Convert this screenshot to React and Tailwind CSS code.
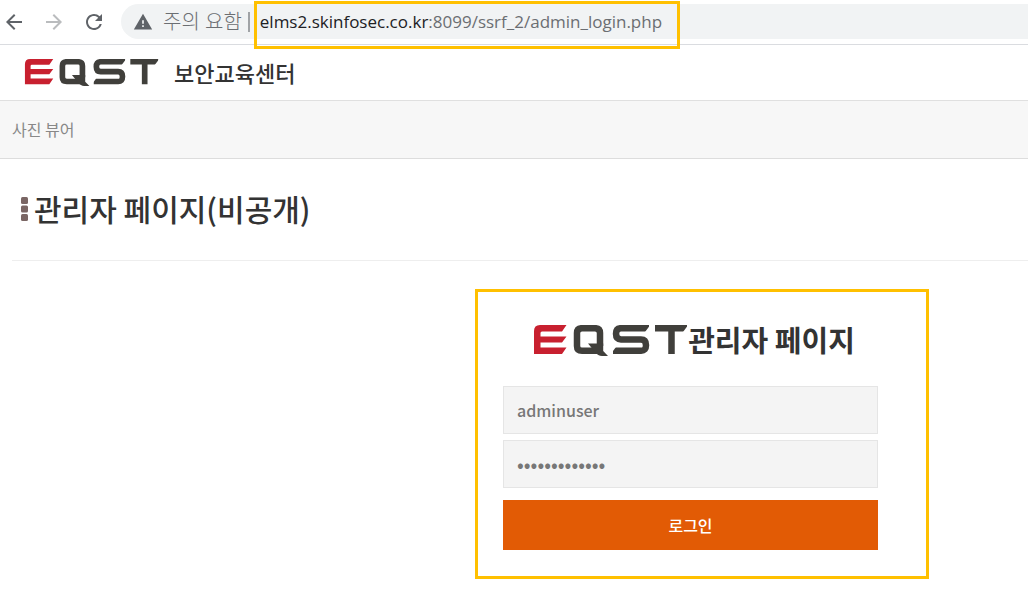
import React from 'react'
import { MdArrowBack, MdArrowForward, MdRefresh, MdWarning } from 'react-icons/md'

const EqstLogo = ({ className }) => (
    <svg viewBox="0 0 154 31" className={className} role="img" aria-label="EQST">
        <path
            fill="#c8202f"
            d="M6 0H32.500L28 6.500H8Q6.500 6.500 6.500 8V11.500H32.500L28 17.500H6.500V22.500H32.500L28 29H0V6Q0 0 6 0Z"
        />
        <g fill="none" stroke="#403f3b" strokeWidth="6.5">
            <path d="M66 21V8Q66 3.200 61 3.200H48Q43 3.200 43 8V21Q43 25.800 48 25.800H64" />
            <path d="M115 3.200H87Q82 3.200 82 8.800T87 14.500H107Q112 14.500 112 20.200T107 25.800H79" />
            <path d="M121 3.200H153M137.500 3V29" />
        </g>
        <path fill="#403f3b" d="M54 18.500H69.200V26L74 31H68Q64 31 61 27Z" />
        <path fill="#fff" d="M117 -1V7H111ZM155 -1V7H149ZM76 21V30L82 22Z" />
    </svg>
)

const BrowserBar = () => (
    <div className="flex h-[45px] items-start border-b border-[#dadce0] pt-1">
        <div className="flex h-[35px] w-[121px] shrink-0 items-center gap-4 pl-0.5 text-[#5f6368]">
            <button type="button" aria-label="뒤로">
                <MdArrowBack className="size-6" />
            </button>
            <button type="button" aria-label="앞으로" className="text-[#babcbe]">
                <MdArrowForward className="size-6" />
            </button>
            <button type="button" aria-label="새로고침">
                <MdRefresh className="size-6" />
            </button>
        </div>
        <div className="flex h-[35px] flex-1 items-center rounded-l-full bg-[#f1f3f4] pl-3 font-['Open_Sans','Noto_Sans_CJK_KR',sans-serif] text-[17px] text-[#6b6e72]">
            <MdWarning className="mr-2.5 size-5 text-[#5f6368]" />
            <span className="text-[20px] leading-6 font-light">주의 요함</span>
            <span className="mr-1 ml-1.5 h-5 w-0.5 bg-[#a0a3a6]" />
            <div className="relative flex h-full items-center px-1.5">
                <span className="text-[#202124]">elms2.skinfosec.co.kr</span>
                <span>:8099/ssrf_2/admin_login.php</span>
                {/* highlight frame */}
                <span className="absolute -top-[3px] -right-3 -bottom-[10px] left-0 border-3 border-[#ffc000]" />
            </div>
        </div>
    </div>
)

const LoginForm = () => (
    <form
        className="w-[454px] border-3 border-[#ffc000] pt-7 pr-12 pb-[26px] pl-[25px]"
        onSubmit={(e) => e.preventDefault()}
    >
        <h2 className="mb-[26px] flex h-10 items-center justify-center pl-2 text-[29px] font-bold text-[#333]">
            <EqstLogo className="h-[31px] w-[154px] shrink-0" />
            관리자 페이지
        </h2>
        <input
            type="text"
            aria-label="아이디"
            defaultValue="adminuser"
            className="mb-1.5 block h-12 w-full border border-[#e5e5e5] bg-[#f4f4f4] px-[13px] text-[16px] font-medium text-[#777]"
        />
        <input
            type="password"
            aria-label="비밀번호"
            defaultValue="adminpassword"
            className="mb-3 block h-12 w-full border border-[#e5e5e5] bg-[#f4f4f4] px-[13px] pb-0.5 text-[20px] text-[#777]"
        />
        <button type="submit" className="block h-[50px] w-full bg-[#e25b05] text-[16px] font-medium text-white">
            로그인
        </button>
    </form>
)

const App = () => {
    return (
        <div className="min-h-screen overflow-x-hidden bg-white font-['Noto_Sans_CJK_KR',sans-serif] text-[#333]">
            <BrowserBar />
            <header className="flex h-14 items-center gap-3.5 border-b border-[#e0e0e0] pl-6">
                <EqstLogo className="h-[27px] w-[136px]" />
                <span className="text-[22px] font-medium">보안교육센터</span>
            </header>
            <nav className="flex h-[58px] items-center border-b border-[#ddd] bg-[#f7f7f7] pb-0.5 pl-3">
                <a href="#viewer" className="text-[16px] text-[#888]">사진 뷰어</a>
            </nav>
            <main className="pl-3">
                <div className="flex h-[102px] items-center gap-1.5 border-b border-[#eee] pb-0.5 pl-2">
                    <svg viewBox="0 0 8 24" className="h-6 w-2" fill="#7a6664" aria-hidden="true">
                        <rect x="1" width="7" height="7" rx="1.500" />
                        <rect x="1" y="8.500" width="7" height="7" rx="1.500" />
                        <rect x="1" y="17" width="7" height="7" rx="1.500" />
                    </svg>
                    <h1 className="text-[30px] font-medium">관리자 페이지(비공개)</h1>
                </div>
                <div className="flex justify-end pt-7 pr-[99px]">
                    <LoginForm />
                </div>
            </main>
        </div>
    )
}

export default App
